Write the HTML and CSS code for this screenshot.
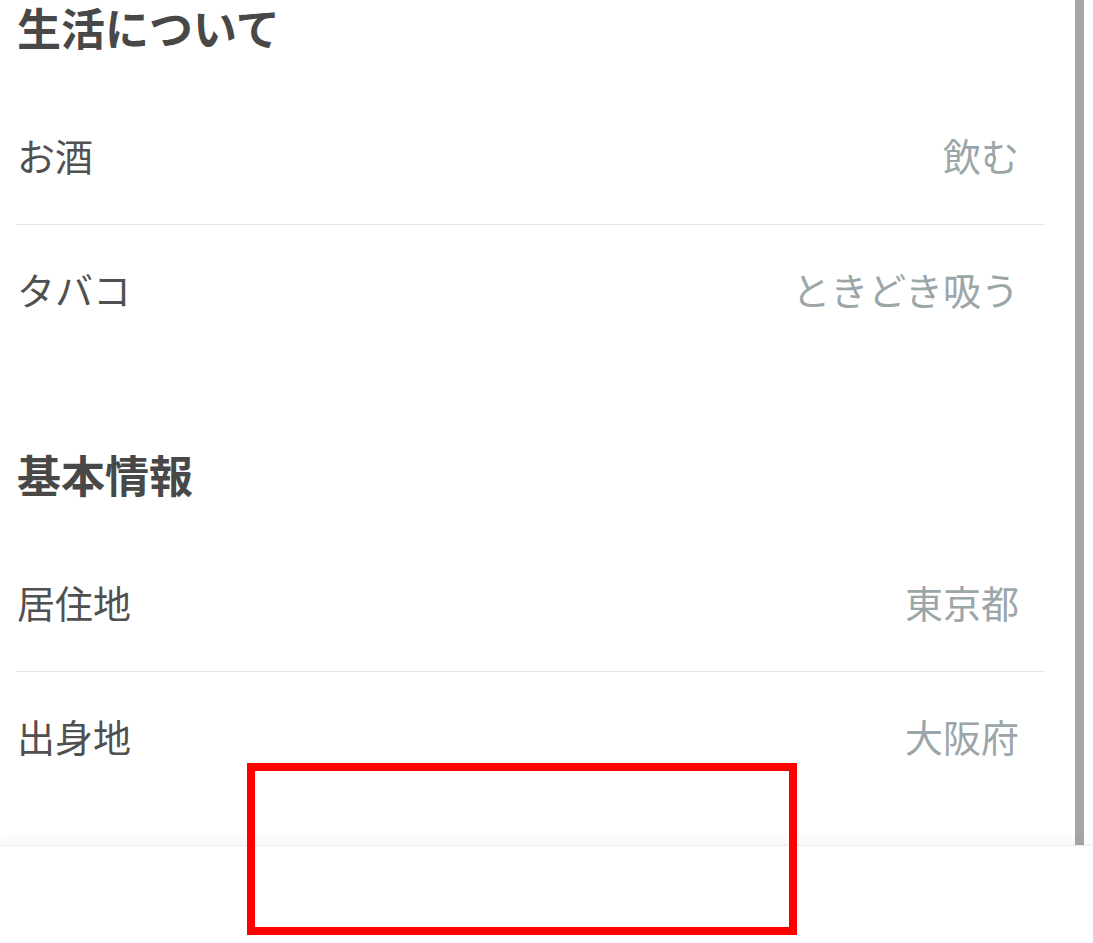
FILE: index.html
```html
<!DOCTYPE html>
<html lang="ja">
<head>
<meta charset="utf-8">
<title>プロフィール</title>
<link rel="stylesheet" href="styles.css">
</head>
<body>
<div class="screen">
  <div class="main">
    <div class="content">
      <section class="section">
        <h2 class="section-title first">生活について</h2>
        <div class="row"><span class="label">お酒</span><span class="value">飲む</span></div>
        <div class="row"><span class="label">タバコ</span><span class="value">ときどき吸う</span></div>
      </section>
      <section class="section">
        <h2 class="section-title">基本情報</h2>
        <div class="row"><span class="label">居住地</span><span class="value">東京都</span></div>
        <div class="row"><span class="label">出身地</span><span class="value">大阪府</span></div>
      </section>
    </div>
    <div class="scrollbar"><div class="thumb"></div></div>
  </div>
  <footer class="footer"></footer>
  <div class="highlight"></div>
</div>
</body>
</html>
```

FILE: styles.css
```css
* { box-sizing: border-box; }
html, body { margin: 0; padding: 0; background: #ffffff; }
body {
  font-family: "Noto Sans CJK JP", "Noto Sans", sans-serif;
  color: #4a4a4a;
}
.screen {
  position: relative;
  width: 1093px;
  height: 943px;
  overflow: hidden;
  display: flex;
  flex-direction: column;
}
.main {
  height: 845px;
  display: flex;
  overflow: hidden;
}
.content {
  width: 1075px;
  padding: 0 30px 0 16px;
}
.section { padding-bottom: 61px; }
.section-title {
  margin: 0;
  height: 118px;
  display: flex;
  align-items: center;
  padding: 0 0 8px 1px;
  font-size: 44px;
  line-height: 1.2;
  font-weight: 700;
  color: #484848;
}
.section-title.first {
  height: 90px;
  padding-bottom: 36px;
}
.row {
  height: 134px;
  display: flex;
  align-items: center;
  justify-content: space-between;
  padding: 0 26px 6px 1px;
  font-size: 38px;
}
.row + .row { border-top: 1px solid #e6e6e6; }
.label { color: #505050; }
.value { color: #9ba6a8; }
.scrollbar {
  width: 18px;
  padding-right: 9px;
}
.thumb {
  width: 9px;
  height: 100%;
  background: #a6a6a6;
}
.footer {
  flex: 1;
  background: #ffffff;
  border-top: 1px solid #ececec;
  box-shadow: 0 -6px 12px rgba(0, 0, 0, 0.035);
  position: relative;
  z-index: 1;
}
.highlight {
  position: absolute;
  left: 247px;
  top: 763px;
  width: 550px;
  height: 172px;
  border: 8px solid #ff0000;
  z-index: 2;
}
```
